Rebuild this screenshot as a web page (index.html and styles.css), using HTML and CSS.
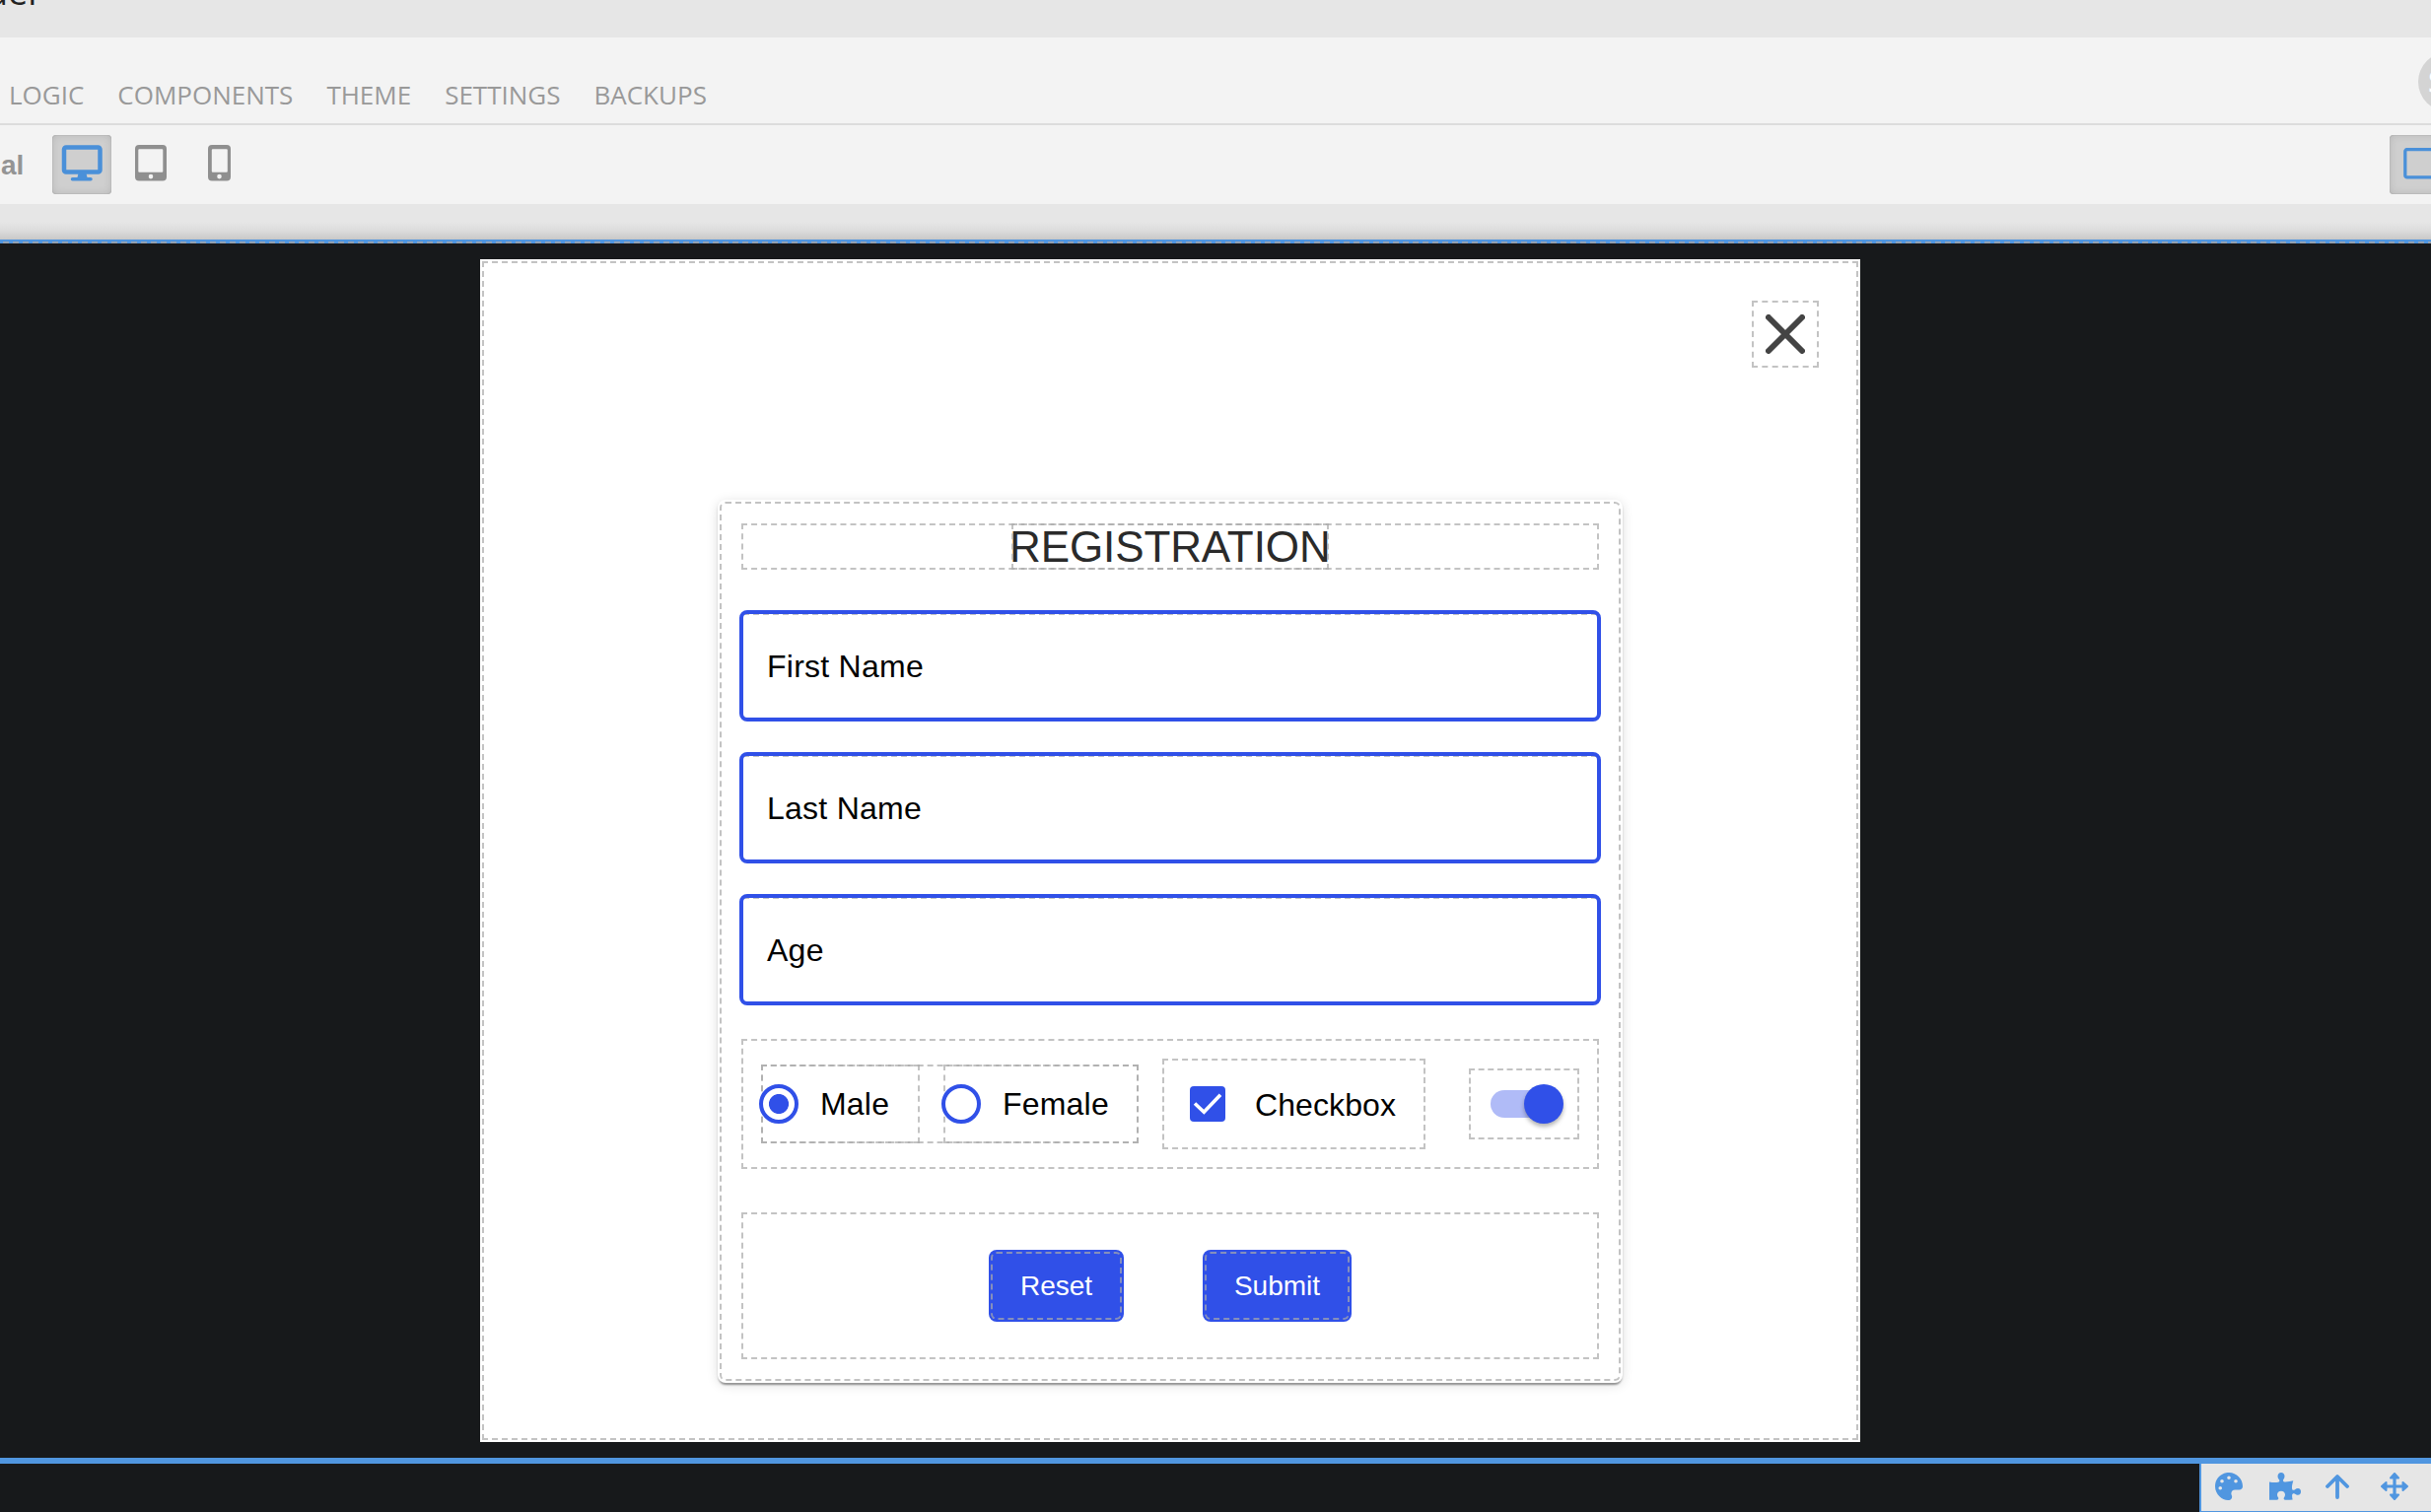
FILE: index.html
```
<!DOCTYPE html>
<html lang="en">
<head>
<meta charset="utf-8">
<title>UI Builder</title>
<link rel="stylesheet" href="styles.css">
</head>
<body>
<header class="titlebar"><span class="title">der</span></header>
<nav class="nav">
  <div class="tabs"><span>LOGIC</span><span>COMPONENTS</span><span>THEME</span><span>SETTINGS</span><span>BACKUPS</span></div>
  <div class="avatar">S</div>
</nav>
<div class="toolbar">
  <span class="mode">al</span>
  <span class="tool active">
    <svg width="42" height="38" viewBox="0 0 42 38"><rect x="3" y="2.500" width="36.500" height="25" rx="2" fill="none" stroke="currentColor" stroke-width="4.500"/><path d="M17.500 29h8l1 4h3.500a1.700 1.700 0 0 1 0 3.500h-18.500a1.700 1.700 0 0 1 0-3.500h5z" fill="currentColor"/></svg>
  </span>
  <span class="tool">
    <svg width="32" height="38" viewBox="0 0 32 38"><path fill="currentColor" fill-rule="evenodd" d="M4 0h24a4 4 0 0 1 4 4v28.500a4 4 0 0 1-4 4H4a4 4 0 0 1-4-4V4a4 4 0 0 1 4-4zM4.300 4.200h23a1 1 0 0 1 1 1v21.500a1 1 0 0 1-1 1h-23a1 1 0 0 1-1-1v-21.500a1 1 0 0 1 1-1zM16 29.800a2.300 2.300 0 1 0 0 4.600 2.300 2.300 0 0 0 0-4.600z"/></svg>
  </span>
  <span class="tool phone">
    <svg width="23" height="38" viewBox="0 0 23 38"><path fill="currentColor" fill-rule="evenodd" d="M4 0h15a4 4 0 0 1 4 4v28.500a4 4 0 0 1-4 4H4a4 4 0 0 1-4-4V4a4 4 0 0 1 4-4zM4.800 4.200h14a1 1 0 0 1 1 1v21.500a1 1 0 0 1-1 1h-14a1 1 0 0 1-1-1v-21.500a1 1 0 0 1 1-1zM11.500 29.800a2.300 2.300 0 1 0 0 4.600 2.300 2.300 0 0 0 0-4.600z"/></svg>
  </span>
  <span class="tool active outline-toggle">
    <svg width="42" height="32" viewBox="0 0 42 32"><rect x="1.800" y="1.600" width="38" height="28.300" rx="2" fill="none" stroke="currentColor" stroke-width="3.300"/></svg>
  </span>
</div>
<div class="gutter"></div>
<main class="canvas">
  <section class="popup guide">
    <div class="close guide">
      <svg width="40" height="40" viewBox="0 0 40 40"><path d="M3 3l34 34M37 3L3 37" fill="none" stroke="#444" stroke-width="6" stroke-linecap="round"/></svg>
    </div>
    <form class="card guide">
      <div class="heading guide"><span class="heading-text guide">REGISTRATION</span></div>
      <div class="field">First Name</div>
      <div class="field">Last Name</div>
      <div class="field">Age</div>
      <div class="options guide">
        <div class="radios guide">
          <label class="radio guide"><i class="dot on"></i>Male</label>
          <label class="radio guide"><i class="dot"></i>Female</label>
        </div>
        <label class="check guide">
          <svg width="36" height="36" viewBox="0 0 36 36"><rect width="36" height="36" rx="4" fill="#3050e8"/><path d="M5 17.500L14.300 26.200L31 8.700" fill="none" stroke="#fff" stroke-width="3.600"/></svg><span class="check-text">Checkbox</span>
        </label>
        <div class="switch guide"><div class="track"><i class="thumb"></i></div></div>
      </div>
      <div class="actions guide">
        <span class="btn reset guide">Reset</span>
        <span class="btn submit guide">Submit</span>
      </div>
    </form>
  </section>
</main>
<footer class="bottom">
  <div class="quick">
    <svg width="28" height="28" viewBox="0 0 512 512"><path fill="currentColor" d="M204.300 5C104.900 24.400 24.800 104.300 5.200 203.400c-37 187 131.700 326.400 258.800 306.700 41.200-6.400 61.400-54.600 42.500-91.700-23.100-45.400 9.900-98.400 60.900-98.400h79.700c35.800 0 64.800-29.600 64.900-65.300C511.500 97.100 368.100-26.900 204.300 5zM96 320c-17.700 0-32-14.300-32-32s14.300-32 32-32 32 14.300 32 32-14.300 32-32 32zm32-128c-17.700 0-32-14.300-32-32s14.300-32 32-32 32 14.300 32 32-14.300 32-32 32zm128-64c-17.700 0-32-14.300-32-32s14.300-32 32-32 32 14.300 32 32-14.300 32-32 32zm128 64c-17.700 0-32-14.300-32-32s14.300-32 32-32 32 14.300 32 32-14.300 32-32 32z"/></svg>
    <svg class="puzzle" width="32" height="28" viewBox="0 0 32 28"><path fill="currentColor" d="M0 9.500C3 10 6 10.300 9 9.800C10.800 9.300 10.600 8 9.800 7C9 6 8.500 5 8.500 3.800C8.500 1.500 10 0 12 0S15.500 1.500 15.500 3.800C15.500 5 15 6 14.300 7C13.500 8.200 14 9.300 15.500 9.400C18.500 9.500 21.500 9 24.300 8.300C23.500 11 22.800 13.500 23 16C23.200 18 24.500 18.300 26 17.200C27 16.400 28 15.900 29 15.900C31 15.900 32 17.300 32 19.300S31 22.700 29 22.700C27.800 22.700 27 22.200 26 21.700C24.500 21 23.300 21.300 23.100 23C23 24.500 23.300 26 23.600 27.500C21 27.500 18.500 28 16.300 27.700C14.500 27.500 14.300 26.300 15 25.200C15.600 24.300 16 23.500 16 22.500C16 20.300 14.300 18.800 12 18.800S8 20.300 8 22.500C8 23.500 8.300 24.300 9 25.200C9.700 26.300 9.300 27.500 7.500 27.700C5 28 2.500 27.700 0 27.700Z"/></svg>
    <svg class="up" width="24" height="28" viewBox="0 0 24 28"><path fill="none" stroke="currentColor" stroke-width="3.800" stroke-linecap="round" stroke-linejoin="round" d="M12 25V5M2 14L12 4L22 14"/></svg>
    <svg class="move" width="28" height="28" viewBox="0 0 28 28"><path fill="none" stroke="currentColor" stroke-width="3.200" d="M14 5v18M5 14h18"/><path fill="currentColor" stroke="currentColor" stroke-width="2" stroke-linejoin="round" d="M14 1L18 5.500H10ZM14 27L18 22.500H10ZM1 14L5.500 10V18ZM27 14L22.500 10V18Z"/></svg>
  </div>
</footer>
</body>
</html>
```

FILE: styles.css
```
* { box-sizing: border-box; }
body {
  margin: 0;
  width: 2466px;
  height: 1534px;
  overflow: hidden;
  background: #17191b;
  font-family: "Liberation Sans", Arial, sans-serif;
  display: flex;
  flex-direction: column;
}
svg { display: block; flex: none; }
.guide { outline: 2px dashed rgba(170, 170, 170, .7); outline-offset: -4px; }

.titlebar { height: 38px; background: #e6e6e6; overflow: hidden; }
.title {
  display: block;
  margin: -33px 0 0 -14px;
  font: 36px/50px "Open Sans", sans-serif;
  color: #222;
}
.nav {
  height: 89px;
  flex: none;
  background: #f3f3f3;
  border-bottom: 2px solid #dcdcdc;
  display: flex;
  justify-content: space-between;
}
.tabs {
  display: flex;
  gap: 34px;
  padding: 40px 0 0 9px;
  font: 26px/36px "Open Sans", sans-serif;
  color: #999;
}
.avatar {
  width: 60px;
  height: 60px;
  margin: 15px -47px 0 0;
  flex: none;
  border-radius: 50%;
  background: #d4d4d4;
  color: #fff;
  font: 600 30px/60px "Open Sans", sans-serif;
  padding-left: 10px;
}
.toolbar {
  height: 80px;
  flex: none;
  background: #f3f3f3;
  display: flex;
  align-items: flex-start;
  padding-top: 10px;
  color: #8f8f8f;
}
.mode { width: 53px; padding-left: 1px; font-size: 28px; line-height: 61px; font-weight: bold; color: #949494; }
.tool { width: 60px; height: 60px; margin-right: 10px; padding: 10px 0 0; display: flex; justify-content: center; }
.phone { padding-right: 1px; }
.active {
  border-radius: 4px;
  background: #cfcfcf;
  box-shadow: inset 0 0 8px rgba(0, 0, 0, .12), inset 0 0 1px rgba(0, 0, 0, .4);
  color: #4a90d9;
}
.outline-toggle { margin: 0 -18px 0 auto; padding-top: 13px; justify-content: flex-start; padding-left: 14px; flex: none; }
.gutter { height: 36px; flex: none; background: linear-gradient(#e6e6e6 50%, #dcdcdc 75%, #c8c8c8); }

.canvas {
  height: 1242px;
  flex: none;
  border-top: 2px solid #5096e0;
  border-bottom: 6px solid #5096e0;
  background: repeating-linear-gradient(90deg, #5096e0 0 3px, #91a0b2 3px 9px, #5096e0 9px 10px) 0 0 / 100% 2px no-repeat, #17191b;
  padding: 18px 579px 0 487px;
}
.popup { width: 1400px; height: 1200px; background: #fff; padding: 40px 40px 0 241px; }
.close { width: 72px; height: 72px; margin: 0 0 132px auto; padding: 16px; }
.card {
  width: 918px;
  height: 896px;
  padding: 22px;
  border-radius: 8px;
  background: #fff;
  box-shadow: 0 4px 2px -2px rgba(0, 0, 0, .25), 0 2px 2px rgba(0, 0, 0, .18), 0 2px 12px rgba(0, 0, 0, .13);
}
.heading { height: 51px; margin-bottom: 39px; display: flex; justify-content: center; }
.heading-text { width: 326px; font-size: 44px; line-height: 52px; color: #2a2a2a; white-space: nowrap; letter-spacing: -.1px; }
.field {
  height: 113px;
  margin-bottom: 31px;
  border: 4px solid #3050e8;
  border-radius: 8px;
  padding-left: 24px;
  font-size: 32px;
  letter-spacing: .25px;
  line-height: 106px;
  background: repeating-linear-gradient(90deg, #c3c3c3 0 6px, #fff 6px 10px) 0 0 / 100% 1px no-repeat;
}
.options { height: 136px; margin: 32px 0 40px; padding: 0 20px; display: flex; align-items: center; font-size: 32px; }
.radios { width: 387px; height: 84px; display: flex; justify-content: space-between; }
.radio { width: 165px; display: flex; align-items: center; gap: 22px; letter-spacing: .2px; }
.radio + .radio { width: 202px; }
.dot { position: relative; width: 40px; height: 40px; flex: none; border: 4px solid #3050e8; border-radius: 50%; }
.dot.on { background: radial-gradient(circle, #3050e8 9.600px, transparent 10.400px); }
.check { width: 271px; height: 96px; margin-left: 20px; padding-left: 30px; display: flex; align-items: center; gap: 30px; }
.check-text { padding-top: 2px; letter-spacing: .1px; }
.switch { width: 116px; height: 76px; margin-left: 40px; padding: 24px; }
.track { width: 68px; height: 28px; border-radius: 14px; background: #b0bbf7; }
.thumb {
  display: block;
  width: 40px;
  height: 40px;
  position: relative;
  top: -6px;
  left: 34px;
  border-radius: 50%;
  background: #3050e8;
  box-shadow: 0 3px 4px rgba(0, 0, 0, .3);
}
.actions { height: 153px; display: flex; align-items: center; justify-content: center; gap: 80px; }
.btn { height: 73px; border-radius: 8px; background: #3050e8; color: #fff; font-size: 28px; line-height: 73px; text-align: center; }
.reset { width: 137px; }
.submit { width: 151px; }

.bottom { flex: 1; display: flex; justify-content: flex-end; }
.quick {
  width: 235px;
  background: #e6e6e6;
  border-left: 2px solid #5096e0;
  border-bottom: 1px solid #5096e0;
  color: #5096e0;
  padding: 9px 0 0 14px;
  display: flex;
}
.puzzle { margin-left: 27px; }
.up { margin-left: 25px; }
.move { margin-left: 32px; }
```
